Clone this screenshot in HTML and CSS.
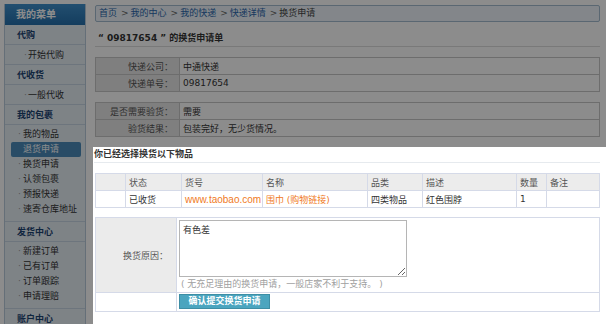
FILE: index.html
```html
<!DOCTYPE html>
<html>
<head>
	<meta charset="utf-8">
	<title>换货申请</title>
	<link rel="stylesheet" href="styles.css">
</head>
<body>
	<div class="page">
		<div class="sidebar">
			<div class="menu_head">我的菜单</div>
			<div class="group">代购</div>
			<ul class="sub single"><li>开始代购</li></ul>
			<div class="group">代收货</div>
			<ul class="sub single"><li>一般代收</li></ul>
			<div class="group">我的包裹</div>
			<ul class="sub">
				<li>我的物品</li>
				<li class="on">退货申请</li>
				<li>换货申请</li>
				<li>认领包裹</li>
				<li>预报快递</li>
				<li>速寄仓库地址</li>
			</ul>
			<div class="group">发货中心</div>
			<ul class="sub">
				<li>新建订单</li>
				<li>已有订单</li>
				<li>订单跟踪</li>
				<li>申请理赔</li>
			</ul>
			<div class="group">账户中心</div>
		</div>
		<div class="main">
			<div class="crumb">
				<a>首页</a><span class="sep">&gt;</span><a>我的中心</a><span class="sep">&gt;</span><a>我的快递</a><span class="sep">&gt;</span><a>快递详情</a><span class="sep">&gt;</span><span>换货申请</span>
			</div>
			<div class="title">“ 09817654 ” 的换货申请单</div>
			<table class="info">
				<tr><th>快递公司：</th><td>中通快递</td></tr>
				<tr><th>快递单号：</th><td>09817654</td></tr>
			</table>
			<table class="info">
				<tr><th>是否需要验货：</th><td>需要</td></tr>
				<tr><th>验货结果：</th><td>包装完好，无少货情况。</td></tr>
			</table>
			<div class="focus">
				<div class="sub_title">你已经选择换货以下物品</div>
				<table class="goods">
					<colgroup>
						<col style="width:30px"><col style="width:56px"><col style="width:81px"><col style="width:105px">
						<col style="width:55px"><col style="width:94px"><col style="width:30px"><col style="width:53px">
					</colgroup>
					<tr class="head"><td></td><td>状态</td><td>货号</td><td>名称</td><td>品类</td><td>描述</td><td>数量</td><td>备注</td></tr>
					<tr><td></td><td>已收货</td><td class="orange latin">www.taobao.com</td><td class="orange">围巾 (购物链接)</td><td>四类物品</td><td>红色围脖</td><td>1</td><td></td></tr>
				</table>
				<table class="reason">
					<tr>
						<th>换货原因：</th>
						<td>
							<textarea>有色差</textarea>
							<div class="hint">( 无充足理由的换货申请，一般店家不利于支持。 )</div>
						</td>
					</tr>
					<tr class="btn_row">
						<th></th>
						<td><button class="submit">确认提交换货申请</button></td>
					</tr>
				</table>
			</div>
		</div>
	</div>
</body>
</html>
```

FILE: styles.css
```css
html, body{
	margin: 0;
	padding: 0;
	background: #fff;
	overflow: hidden;
	height: 100%;
}
body{
	font-family: "DejaVu Sans", "Noto Sans CJK SC", sans-serif;
	font-size: 9px;
	color: #333;
}
.page{
	display: flex;
	align-items: flex-start;
}
.sidebar{
	width: 81px;
	margin: 4px 0 0 4px;
	background: #e6eef5;
	border-left: 1px solid #b9cbdb;
	border-right: 1px solid #b9cbdb;
}
.menu_head{
	height: 21px;
	line-height: 21px;
	padding-left: 11px;
	color: #fff;
	font-weight: bold;
	font-size: 10px;
	background: linear-gradient(#3f90cc, #256fab);
}
.group{
	height: 19px;
	line-height: 20px;
	padding-left: 12px;
	color: #1c4472;
	font-weight: bold;
	border-bottom: 1px solid #c7d6e4;
}
.sub{
	list-style: none;
	margin: 0;
	padding: 2px 0 4px;
	border-bottom: 1px solid #c7d6e4;
}
.sub li{
	height: 15px;
	line-height: 15px;
	margin: 0 4px 0 6px;
	padding-left: 12px;
	position: relative;
	color: #333;
}
.sub li:before{
	content: "·";
	position: absolute;
	left: 7px;
	color: #999;
}
.sub li.on{
	background: #4b8bbb;
	color: #fff;
	border-radius: 2px;
}
.sub li.on:before{
	color: #4b8bbb;
}
.sub.single{
	padding: 0;
}
.sub.single li{
	height: 19px;
	line-height: 20px;
	margin: 0;
	padding-left: 23px;
}
.sub.single li:before{
	left: 19px;
}
.main{
	flex: 1;
	margin-left: 7px;
	padding-top: 5px;
}
.crumb{
	margin: 0 6px 0 2px;
	height: 15px;
	line-height: 15px;
	padding-left: 3px;
	background: #eef5fb;
	border: 1px solid #a4bccf;
	border-radius: 2px;
	color: #444;
}
.crumb a{
	color: #2b66ad;
}
.crumb .sep{
	margin: 0 2px 0 4px;
	color: #666;
}
.title{
	margin: 0 6px 0 2px;
	height: 16px;
	line-height: 16px;
	padding: 8px 3px 0;
	font-weight: bold;
	color: #333;
	border-bottom: 1px solid #dcdcdc;
}
.info{
	width: 505px;
	margin: 10px 0 0 2px;
	border-collapse: collapse;
}
.info th, .info td{
	height: 16px;
	padding: 0 3px;
	border: 1px solid #c6c6c6;
	font-weight: normal;
	text-align: left;
}
.info th{
	width: 74px;
	text-align: right;
	padding-right: 6px;
	background: #e8e8e8;
	color: #555;
}
.focus{
	position: relative;
	z-index: 5;
	margin-top: 10px;
	padding: 0 6px 40px 2px;
	background: #fff;
	box-shadow: 0 0 0 1200px rgba(0, 0, 0, .45);
}
.sub_title{
	height: 15px;
	line-height: 15px;
	font-weight: bold;
	color: #333;
	border-bottom: 1px solid #e6eaee;
	margin-left: -1px;
}
.goods{
	width: 505px;
	margin-top: 10px;
	border-collapse: collapse;
	table-layout: fixed;
}
.goods td{
	height: 16px;
	padding: 0 3px;
	border: 1px solid #d5dae8;
	white-space: nowrap;
	overflow: hidden;
}
.goods .head td{
	background: #ececec;
	color: #555;
}
.orange{
	color: #f07a1e;
}
.latin{
	font-family: "Liberation Sans", sans-serif;
	font-size: 10px;
}
.reason{
	width: 505px;
	margin-top: 9px;
	border-collapse: collapse;
}
.reason th, .reason td{
	border: 1px solid #d5dae8;
	padding: 0;
	font-weight: normal;
}
.reason th{
	width: 72px;
	padding-right: 8px;
	text-align: right;
	background: #ebebeb;
	color: #555;
}
.reason td{
	padding: 2px 2px 0;
}
.reason textarea{
	display: block;
	box-sizing: border-box;
	width: 228px;
	height: 57px;
	margin: 0;
	padding: 2px 3px;
	border: 1px solid #b5b5b5;
	font-family: "DejaVu Sans", "Noto Sans CJK SC", sans-serif;
	font-size: 9px;
	color: #333;
	resize: both;
}
.hint{
	height: 15px;
	line-height: 14px;
	padding-left: 2px;
	color: #a0a0a0;
}
.btn_row th{
	background: #fff;
}
.btn_row td{
	height: 15px;
	padding: 1px 2px 2px;
}
.submit{
	display: block;
	width: 91px;
	height: 15px;
	margin: 0;
	padding: 0;
	border: 1px solid #3d8ea5;
	background: #4ba5bf;
	color: #fff;
	font-weight: bold;
	font-family: "DejaVu Sans", "Noto Sans CJK SC", sans-serif;
	font-size: 9px;
	line-height: 13px;
}
```
